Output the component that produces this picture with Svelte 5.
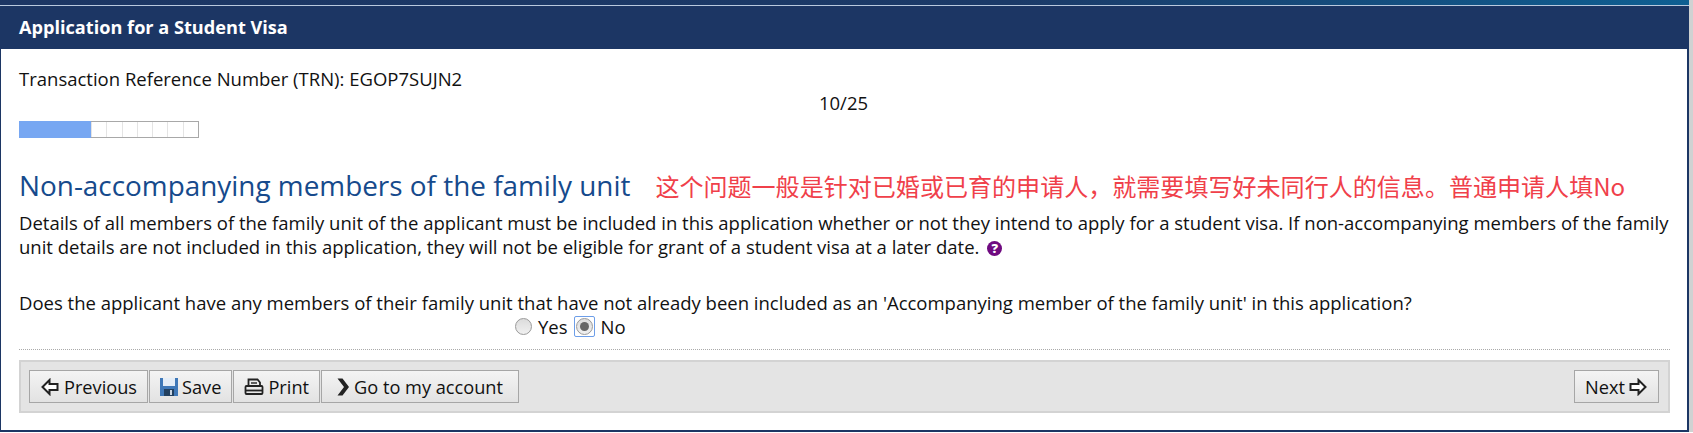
<script lang="ts">
	const cells = Array.from({ length: 7 });
</script>

<div class="window">
	<div class="top-strip"></div>
	<h1 class="title-bar">Application for a Student Visa</h1>

	<main class="content">
		<div class="trn">Transaction Reference Number (TRN): EGOP7SUJN2</div>
		<div class="step">10/25</div>
		<div class="progress">
			<div class="progress-fill"></div>
			{#each cells as _}
				<div class="progress-cell"></div>
			{/each}
		</div>

		<div class="heading-row">
			<h2>Non-accompanying members of the family unit</h2>
			<span class="note">这个问题一般是针对已婚或已育的申请人，就需要填写好未同行人的信息。普通申请人填No</span>
		</div>

		<p class="details">
			Details of all members of the family unit of the applicant must be included in this application whether or not they intend to apply for a student visa. If non-accompanying members of the family unit details are not included in this application, they will not be eligible for grant of a student visa at a later date.
			<span class="help">?</span>
		</p>

		<p class="question">Does the applicant have any members of their family unit that have not already been included as an 'Accompanying member of the family unit' in this application?</p>
		<div class="answers">
			<span class="radio"></span>
			<span class="answer">Yes</span>
			<span class="radio-focus"><span class="radio checked"></span></span>
			<span class="answer">No</span>
		</div>

		<div class="toolbar">
			<div class="group">
				<button class="prev">
					<svg width="18" height="18" viewBox="0 0 18 18"><path d="M1.500 9 8.500 2v4h8v6h-8v4Z" fill="#fff" stroke="#222" stroke-width="2" /></svg>
					Previous
				</button>
				<button>
					<svg width="18" height="18" viewBox="0 0 18 18">
						<rect x="0" y="0" width="18" height="18" fill="#3f78b8" />
						<rect x="3" y="0" width="12" height="8" fill="#e4edf7" />
						<rect x="4" y="11" width="10" height="7" fill="#22405f" />
						<rect x="10" y="12" width="2" height="5" fill="#c8d4e2" />
					</svg>
					Save
				</button>
				<button>
					<svg width="20" height="18" viewBox="0 0 20 18" fill="none" stroke="#222" stroke-width="1.800">
						<path d="M4.500 8V1.500h9l2.500 3V8" />
						<path d="M7 5h6" stroke-width="1.400" />
						<rect x="1.500" y="8" width="17" height="8" rx="1" />
						<path d="M1.500 12.500h17" />
					</svg>
					Print
				</button>
				<button class="go">
					<svg width="14" height="18" viewBox="0 0 14 18"><path d="M1.500 .5h5L13 9l-6.500 8.500h-5L8 9Z" fill="#222" /></svg>
					Go to my account
				</button>
			</div>
			<button class="next">
				Next
				<svg width="18" height="18" viewBox="0 0 18 18"><path d="M16.500 9 9.500 2v4h-8v6h8v4Z" fill="#fff" stroke="#222" stroke-width="2" /></svg>
			</button>
		</div>
	</main>
</div>

<style>
	:global(body) {
		background: #fff;
		font-family: 'Open Sans', 'Noto Sans', sans-serif;
		color: #111;
	}

	.window {
		width: 1689px;
		height: 432px;
		box-sizing: border-box;
		display: flex;
		flex-direction: column;
		background: #fff;
		border: solid #1c3664;
		border-width: 0 2px 2px 1px;
		box-shadow: 4px 0 0 #cfd2d2;
	}

	.top-strip {
		height: 5px;
		background: linear-gradient(90deg, #1c3664, #1b3a68 60%, #0e5f92);
		border-bottom: 1px solid #b9c9de;
		margin: 0 -2px 0 -1px;
	}

	.title-bar {
		margin: 0 -1px;
		height: 43px;
		padding-left: 19px;
		background: #1c3664;
		color: #fff;
		font-size: 18.150px;
		font-weight: 700;
		line-height: 43px;
	}

	.content {
		padding: 0 16px 0 18px;
		font-size: 18.500px;
	}

	.trn {
		margin-top: 19px;
		line-height: 22px;
	}

	.step {
		text-align: center;
		line-height: 22px;
		margin: 2px 0 7px;
		padding-right: 3px;
	}

	.progress {
		display: flex;
		width: 180px;
		height: 17px;
		box-sizing: border-box;
		border: 1px solid #a8a8a8;
	}

	.progress-fill {
		width: 72px;
		margin: -1px 0 -1px -1px;
		background: #77a7f2;
	}

	.progress-cell {
		flex: 1;
		box-sizing: border-box;
		border-left: 1px solid #e4e4e4;
	}

	.heading-row {
		display: flex;
		align-items: baseline;
		margin-top: 28px;
	}

	h2 {
		margin: 0;
		color: #164a8c;
		font-size: 27.900px;
		font-weight: 400;
		line-height: 38px;
	}

	.note {
		margin-left: 25px;
		color: #f0404a;
		font-family: 'Noto Sans CJK SC', 'Noto Sans', sans-serif;
		font-size: 24.050px;
	}

	.details {
		margin: 7px 0 0;
		line-height: 24px;
		width: 1660px;
	}

	.help {
		display: inline-block;
		width: 15px;
		height: 15px;
		margin-left: 3px;
		border-radius: 50%;
		background: #6f0a80;
		color: #fff;
		font-size: 13px;
		font-weight: 800;
		line-height: 15px;
		text-align: center;
		vertical-align: 1px;
	}

	.question {
		margin: 33px 0 0;
		line-height: 22px;
	}

	.answers {
		display: flex;
		align-items: center;
		height: 24px;
		padding-left: 496px;
	}

	.radio {
		display: block;
		flex: none;
		width: 17px;
		height: 17px;
		box-sizing: border-box;
		border: 1px solid #9a9a9a;
		border-radius: 50%;
		background: linear-gradient(#dcdcdc, #f0f0f0);
	}

	.radio.checked {
		position: relative;
	}

	.radio.checked::after {
		content: '';
		position: absolute;
		inset: 3px;
		border-radius: 50%;
		background: #666;
	}

	.radio-focus {
		display: block;
		margin-left: 6px;
		border: 1px solid #6d9ee8;
		border-radius: 2px;
		padding: 1px;
	}

	.answer {
		margin-left: 6px;
	}

	.toolbar {
		display: flex;
		justify-content: space-between;
		align-items: center;
		height: 53px;
		box-sizing: border-box;
		width: 1651px;
		margin-top: 22px;
		padding: 0 9px 0 8px;
		background: #e4e4e4;
		border: 2px solid #d3d3d3;
		position: relative;
	}

	.toolbar::before {
		content: '';
		position: absolute;
		left: -2px;
		right: -2px;
		top: -13px;
		border-top: 1px dotted #aaa;
	}

	.group {
		display: flex;
		gap: 1px;
	}

	button {
		display: flex;
		align-items: center;
		gap: 4px;
		height: 33px;
		padding: 0 10px 0 10px;
		border: 1px solid #a6a6a6;
		background: linear-gradient(#f4f4f4, #e2e2e2);
		color: #111;
		font: inherit;
		font-size: 18.200px;
	}

	.prev {
		gap: 5px;
		padding-left: 11px;
	}

	.go {
		padding: 0 15px 0 14px;
	}

	.next {
		padding-right: 11px;
	}
</style>
